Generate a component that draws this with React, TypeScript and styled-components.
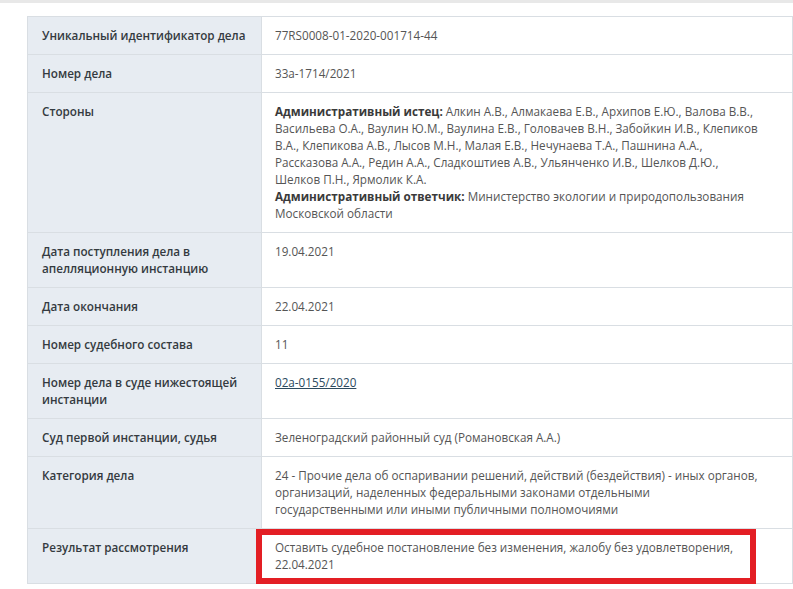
import type { FC, ReactNode } from 'react'
import styled, { createGlobalStyle } from 'styled-components'

const GlobalStyle = createGlobalStyle`
  html, body {
    margin: 0;
    padding: 0;
    background: #ffffff;
  }
  body {
    font-family: "Open Sans", "Liberation Sans", sans-serif;
    font-size: 11.7px;
    line-height: 17px;
  }
`

const Page = styled.div`
  width: 793px;
  min-height: 589px;
  overflow: hidden;
`

const TopBand = styled.div`
  height: 3px;
  background: #e8e8e8;
`

const Table = styled.div`
  margin: 13px 0 0 27px;
  width: 766px;
  box-sizing: border-box;
  border: 1px solid #d9dee3;
  border-bottom: none;
`

const Row = styled.div`
  display: grid;
  grid-template-columns: 234px 1fr;
  border-bottom: 1px solid #d9dee3;
`

const Label = styled.div`
  background: #e7ecf2;
  color: #343a40;
  font-weight: 600;
  padding: 10px 14px 10px 14px;
  border-right: 1px solid #d9dee3;
`

const Value = styled.div`
  position: relative;
  color: #555555;
  padding: 10px 32px 10px 13px;
  background: #ffffff;

  b {
    color: #3a3a3a;
    font-weight: 700;
  }
`

const CaseLink = styled.a`
  color: #2c4a5e;
  text-decoration: underline;
`

// red annotation frame drawn over the last value cell
const Highlight = styled.div`
  position: absolute;
  left: -6px;
  top: 0;
  width: 500px;
  height: 55px;
  box-sizing: border-box;
  border: 6px solid #e31e24;
  pointer-events: none;
`

interface CaseRow {
  label: string
  value: ReactNode
  highlighted?: boolean
}

const rows: CaseRow[] = [
  { label: 'Уникальный идентификатор дела', value: '77RS0008-01-2020-001714-44' },
  { label: 'Номер дела', value: '33а-1714/2021' },
  {
    label: 'Стороны',
    value: (
      <>
        <b>Административный истец:</b> Алкин А.В., Алмакаева Е.В., Архипов Е.Ю., Валова В.В.,
        Васильева О.А., Ваулин Ю.М., Ваулина Е.В., Головачев В.Н., Забойкин И.В., Клепиков
        В.А., Клепикова А.В., Лысов М.Н., Малая Е.В., Нечунаева Т.А., Пашнина А.А.,
        Рассказова А.А., Редин А.А., Сладкоштиев А.В., Ульянченко И.В., Шелков Д.Ю.,
        Шелков П.Н., Ярмолик К.А.
        <br />
        <b>Административный ответчик:</b> Министерство экологии и природопользования
        Московской области
      </>
    ),
  },
  { label: 'Дата поступления дела в апелляционную инстанцию', value: '19.04.2021' },
  { label: 'Дата окончания', value: '22.04.2021' },
  { label: 'Номер судебного состава', value: '11' },
  { label: 'Номер дела в суде нижестоящей инстанции', value: <CaseLink href="#">02а-0155/2020</CaseLink> },
  { label: 'Суд первой инстанции, судья', value: 'Зеленоградский районный суд (Романовская А.А.)' },
  {
    label: 'Категория дела',
    value: '24 - Прочие дела об оспаривании решений, действий (бездействия) - иных органов, организаций, наделенных федеральными законами отдельными государственными или иными публичными полномочиями',
  },
  {
    label: 'Результат рассмотрения',
    value: 'Оставить судебное постановление без изменения, жалобу без удовлетворения, 22.04.2021',
    highlighted: true,
  },
]

const App: FC = () => {
  return (
    <Page>
      <GlobalStyle />
      <TopBand />
      <Table>
        {rows.map((row) => (
          <Row key={row.label}>
            <Label>{row.label}</Label>
            <Value>
              {row.value}
              {row.highlighted && <Highlight />}
            </Value>
          </Row>
        ))}
      </Table>
    </Page>
  )
}

export default App
